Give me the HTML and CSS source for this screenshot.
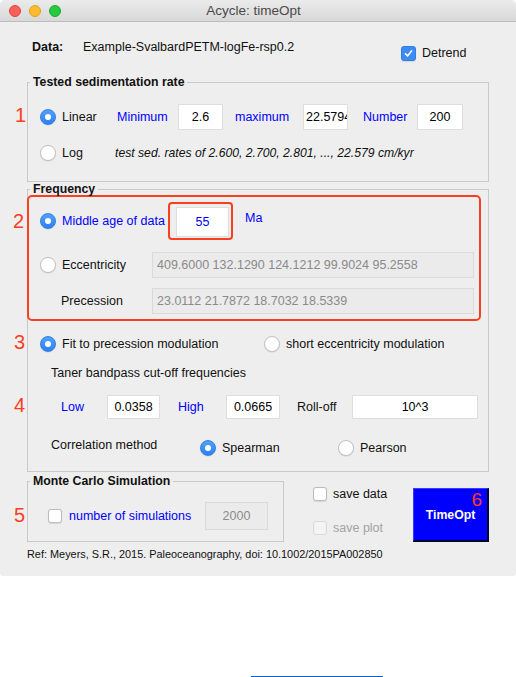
FILE: index.html
```html
<!DOCTYPE html>
<html>
<head>
<meta charset="utf-8">
<link rel="stylesheet" href="styles.css">
</head>
<body>
<div class="window">
  <div class="titlebar">
    <div class="lights"><span class="light red"></span><span class="light yellow"></span><span class="light green"></span></div>
    <div class="title">Acycle: timeOpt</div>
  </div>
  <div class="content">
    <div class="data-row">
      <span class="data-label">Data:</span>
      <span class="data-name">Example-SvalbardPETM-logFe-rsp0.2</span>
      <span class="detrend"><span class="check on"><svg width="15" height="15" viewBox="0 0 15 15"><path d="M4 7.8 L6.4 10.3 L11 4.6" fill="none" stroke="#fff" stroke-width="1.9" stroke-linecap="round" stroke-linejoin="round"/></svg></span>Detrend</span>
    </div>

    <div class="panel p-sed">
      <div class="legend">Tested sedimentation rate</div>
      <div class="row r-linear">
        <span class="opt w-linear"><span class="radio on"></span>Linear</span>
        <span class="blue w-min">Minimum</span>
        <span class="field w45">2.6</span>
        <span class="blue w-max">maximum</span>
        <span class="field w45 left">22.5794</span>
        <span class="blue w-num">Number</span>
        <span class="field w46">200</span>
      </div>
      <div class="row r-log">
        <span class="opt w-log"><span class="radio"></span>Log</span>
        <span class="note">test sed. rates of 2.600, 2.700, 2.801, ..., 22.579 cm/kyr</span>
      </div>
    </div>

    <div class="panel p-freq">
      <div class="legend">Frequency</div>
      <div class="highlight">
        <div class="row r-mid">
          <span class="opt w-mid blue"><span class="radio on"></span>Middle age of data</span>
          <span class="hl-field"><span class="field age">55</span></span>
          <span class="blue ma">Ma</span>
        </div>
        <div class="row r-ecc">
          <span class="opt w-ecc"><span class="radio"></span>Eccentricity</span>
          <span class="field dis wide">409.6000 132.1290 124.1212 99.9024 95.2558</span>
        </div>
        <div class="row r-prec">
          <span class="w-prec">Precession</span>
          <span class="field dis wide">23.0112 21.7872 18.7032 18.5339</span>
        </div>
      </div>
      <div class="row r-fit">
        <span class="opt w-fit"><span class="radio on"></span>Fit to precession modulation</span>
        <span class="opt"><span class="radio"></span>short eccentricity modulation</span>
      </div>
      <div class="taner">Taner bandpass cut-off frequencies</div>
      <div class="row r-band">
        <span class="blue w-low">Low</span>
        <span class="field w53">0.0358</span>
        <span class="blue w-high">High</span>
        <span class="field w54">0.0665</span>
        <span class="w-roll">Roll-off</span>
        <span class="field w126">10^3</span>
      </div>
      <div class="row r-corr">
        <span class="w-corr">Correlation method</span>
        <span class="opt w-spear"><span class="radio on"></span>Spearman</span>
        <span class="opt"><span class="radio"></span>Pearson</span>
      </div>
    </div>

    <div class="bottom">
      <div class="panel p-mc">
        <div class="legend">Monte Carlo Simulation</div>
        <div class="row r-mc">
          <span class="opt w-sims blue"><span class="check"></span>number of simulations</span>
          <span class="field dis w63">2000</span>
        </div>
      </div>
      <div class="saves">
        <div class="opt save"><span class="check"></span>save data</div>
        <div class="opt save off"><span class="check dim"></span>save plot</div>
      </div>
      <div class="run">TimeOpt<span class="six">6</span></div>
    </div>

    <div class="ref">Ref: Meyers, S.R., 2015. Paleoceanography, doi: 10.1002/2015PA002850</div>

    <span class="mark m1">1</span>
    <span class="mark m2">2</span>
    <span class="mark m3">3</span>
    <span class="mark m4">4</span>
    <span class="mark m5">5</span>
  </div>
</div>
<div class="focus-line"></div>
</body>
</html>
```

FILE: styles.css
```css
html, body {
  margin: 0;
  padding: 0;
  background: #ffffff;
}

body {
  font-family: "Liberation Sans", Arial, sans-serif;
  font-size: 12.5px;
  line-height: 14px;
  color: #111;
}

.window {
  width: 516px;
  height: 576px;
  background: #eeeeee;
  border-radius: 5px 5px 3px 3px;
  overflow: hidden;
  box-sizing: border-box;
}

.titlebar {
  height: 22px;
  box-sizing: border-box;
  border-bottom: 1px solid #bdbdbd;
  background: linear-gradient(#ebebeb, #d8d8d8);
  display: flex;
  align-items: center;
}

.lights {
  display: flex;
  gap: 8px;
  padding-left: 9px;
  width: 60px;
}

.light {
  width: 12px;
  height: 12px;
  border-radius: 50%;
  box-sizing: border-box;
}
.light.red { background: #fc5f57; border: 0.5px solid #e0443e; }
.light.yellow { background: #fdbc2e; border: 0.5px solid #dea123; }
.light.green { background: #29c841; border: 0.5px solid #1aab29; }

.title {
  flex: 1;
  text-align: center;
  font-size: 13.5px;
  color: #4a4a4a;
  margin-right: 69px;
  margin-left: -9px;
}

.content {
  position: relative;
  height: 554px;
}

/* data row */
.data-row {
  display: flex;
  align-items: flex-start;
  height: 21px;
  padding-top: 18px;
  padding-left: 32px;
}
.data-label { font-weight: bold; width: 51px; }
.data-name { width: 318px; }
.detrend {
  display: flex;
  align-items: center;
  gap: 6px;
  margin-top: 6px;
  line-height: 15px;
}

/* panels */
.panel {
  border: 1px solid #c9c9c9;
  box-sizing: border-box;
  margin-left: 27px;
}
.legend {
  font-weight: bold;
  font-size: 12.3px;
  width: fit-content;
  margin: -8px 0 0 2px;
  padding: 0 3px;
  background: #eeeeee;
  line-height: 14px;
}
.p-sed {
  margin-top: 21px;
  width: 462px;
  height: 100px;
}
.p-freq {
  margin-top: 7px;
  width: 462px;
  height: 283px;
}

.row {
  display: flex;
  align-items: center;
}

.opt {
  display: flex;
  align-items: center;
  gap: 6px;
  white-space: nowrap;
}

.radio {
  width: 16px;
  height: 16px;
  border-radius: 50%;
  box-sizing: border-box;
  background: #ffffff;
  border: 1px solid #c2c2c2;
  box-shadow: 0 0.5px 1px rgba(0,0,0,0.12);
  flex: none;
}
.radio.on {
  background: linear-gradient(#4fa1fb, #2f80f1);
  border: 1px solid #2d7fe8;
  display: flex;
  align-items: center;
  justify-content: center;
}
.radio.on::after {
  content: "";
  width: 6px;
  height: 6px;
  border-radius: 50%;
  background: #ffffff;
}

.check {
  width: 14px;
  height: 14px;
  border-radius: 3px;
  box-sizing: border-box;
  background: #ffffff;
  border: 1px solid #bdbdbd;
  box-shadow: 0 0.5px 1px rgba(0,0,0,0.1);
  flex: none;
  display: flex;
  align-items: center;
  justify-content: center;
}
.check.on {
  width: 15px;
  height: 15px;
  background: #3b8cf6;
  border: 1px solid #2f7fe6;
}
.check.dim {
  background: #f4f4f4;
  border: 1px solid #dadada;
  box-shadow: none;
}

.blue { color: #0000ff; }

.field {
  background: #ffffff;
  border: 1px solid #dedede;
  box-sizing: border-box;
  height: 26px;
  display: flex;
  align-items: center;
  justify-content: center;
  white-space: nowrap;
  overflow: hidden;
  color: #000;
}
.field.left {
  justify-content: flex-start;
  padding-left: 2px;
}
.field.dis {
  background: #ebebeb;
  border: 1px solid #dadada;
  color: #8a8a8a;
}
.field.wide {
  width: 322px;
  justify-content: flex-start;
  padding-left: 4px;
}

.w45 { width: 45px; }
.w46 { width: 46px; }
.w53 { width: 53px; }
.w54 { width: 54px; }
.w63 { width: 63px; }
.w126 { width: 126px; }

/* sedimentation rows */
.r-linear {
  margin-top: 15px;
  padding-left: 12px;
  height: 26px;
}
.w-linear { width: 77px; }
.w-min { width: 61px; }
.w-max { width: 68px; margin-left: 12px; }
.w-num { width: 54px; margin-left: 15px; }

.r-log {
  margin-top: 13px;
  padding-left: 12px;
  height: 20px;
}
.w-log { width: 75px; }
.note {
  font-style: italic;
  font-size: 12.2px;
  white-space: nowrap;
}

/* frequency */
.highlight {
  margin-top: -1px;
  margin-left: -1px;
  width: 454px;
  box-sizing: border-box;
  border: 2px solid #fb3d20;
  border-radius: 5px;
  padding-bottom: 5px;
}
.r-mid {
  margin-top: 5px;
  padding-left: 11px;
  height: 38px;
}
.w-mid { width: 128px; }
.hl-field {
  width: 65px;
  height: 38px;
  box-sizing: border-box;
  border: 2px solid #fb3d20;
  border-radius: 4px;
  display: flex;
  align-items: center;
  padding-left: 6px;
  padding-top: 1px;
}
.field.age {
  width: 53px;
  height: 30px;
  color: #0000ff;
}
.ma {
  margin-left: 12px;
  margin-bottom: 6px;
}
.r-ecc {
  margin-top: 12px;
  padding-left: 11px;
  height: 26px;
}
.w-ecc { width: 112px; }
.r-prec {
  margin-top: 10px;
  padding-left: 32px;
  height: 26px;
}
.w-prec { width: 91px; }

.r-fit {
  margin-top: 13px;
  padding-left: 12px;
  height: 20px;
}
.w-fit { width: 224px; }

.taner {
  margin-top: 12px;
  padding-left: 23px;
}

.r-band {
  margin-top: 15px;
  padding-left: 33px;
  height: 24px;
}
.r-band .field { height: 24px; }
.w-low { width: 46px; }
.w-high { width: 48px; margin-left: 18px; }
.w-roll { width: 55px; margin-left: 17px; }

.r-corr {
  margin-top: 19px;
  padding-left: 23px;
  height: 20px;
}
.w-corr { width: 149px; margin-bottom: 6px; }
.w-spear { width: 138px; }

/* bottom */
.bottom {
  display: flex;
  align-items: flex-start;
  margin-top: 9px;
}
.p-mc {
  width: 257px;
  height: 61px;
}
.r-mc {
  margin-top: 14px;
  padding-left: 20px;
  height: 28px;
}
.r-mc .field { height: 28px; }
.w-sims { width: 157px; gap: 7px; }

.saves {
  margin-left: 29px;
  margin-top: 6px;
  width: 100px;
}
.save { gap: 6px; height: 14px; }
.save.off { margin-top: 20px; color: #a3a3a3; }

.run {
  position: relative;
  margin-top: 7px;
  width: 76px;
  height: 54px;
  box-sizing: border-box;
  background: #0000ff;
  border-top: 1px solid #3b3bff;
  border-left: 1px solid #3b3bff;
  border-right: 2px solid #05052a;
  border-bottom: 2px solid #05052a;
  color: #ffffff;
  font-weight: bold;
  font-size: 12.3px;
  display: flex;
  align-items: center;
  justify-content: center;
  padding-top: 1px;
}
.six {
  position: absolute;
  top: 1px;
  right: 5px;
  font-size: 19px;
  line-height: 20px;
  font-weight: normal;
  color: #ff3a1e;
}

.ref {
  margin-top: 6px;
  padding-left: 27px;
  font-size: 10.9px;
  line-height: 12px;
  color: #111;
}

/* annotation numbers */
.mark {
  position: absolute;
  font-size: 20px;
  line-height: 20px;
  color: #fb3d20;
}
.m1 { left: 15px; top: 83px; }
.m2 { left: 13px; top: 189px; }
.m3 { left: 14px; top: 310px; }
.m4 { left: 14px; top: 373px; }
.m5 { left: 14px; top: 483px; }

.focus-line {
  margin-top: 100px;
  margin-left: 251px;
  width: 132px;
  height: 1px;
  background: #0a63c9;
}
```
